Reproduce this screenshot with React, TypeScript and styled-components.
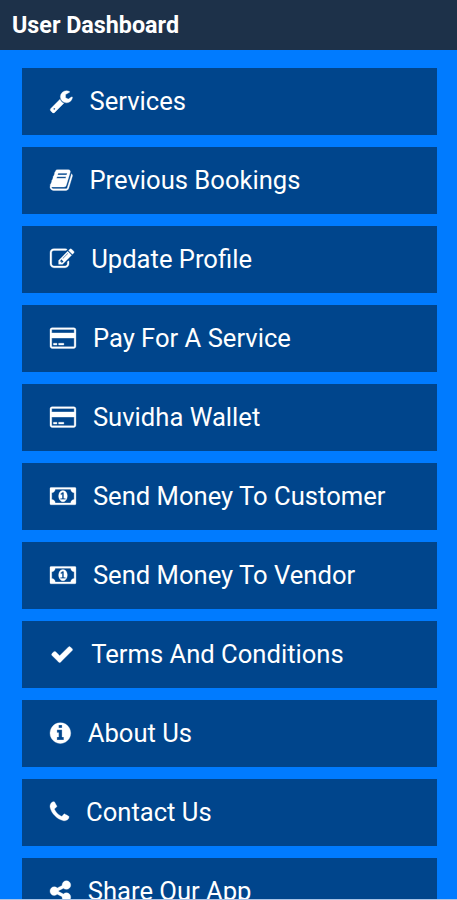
import React from 'react';
import styled, { createGlobalStyle } from 'styled-components';

const Global = createGlobalStyle`
  * { box-sizing: border-box; }
  body { margin: 0; background: #007bff; font-family: Roboto, sans-serif; }
`;

const Page = styled.div`
  height: 900px;
  display: flex;
  flex-direction: column;
  overflow: hidden;
  background: #007bff;
  border-bottom: 1px solid #a9c3e6;
`;

const Header = styled.header`
  flex: none;
  height: 50px;
  display: flex;
  align-items: center;
  padding: 0 12px;
  background: #1d3149;
  color: #fff;
  font-size: 23.3px;
  font-weight: 700;
`;

const Menu = styled.nav`
  display: flex;
  flex-direction: column;
  gap: 12px;
  padding: 18px 20px 0 22px;
`;

const MenuItem = styled.a`
  flex: none;
  height: 67px;
  display: flex;
  align-items: center;
  gap: 17px;
  padding: 0 0 1px 28px;
  background: #00458c;
  color: #fff;
`;

const Label = styled.span`
  font-size: 25.6px;
  line-height: 30px;
  white-space: nowrap;
`;

const Glyph = styled.svg<{ $units: number }>`
  flex: none;
  display: block;
  width: ${({ $units }) => ($units / 1792) * 24.2}px;
  height: 24.2px;
  margin-top: 1px;
  fill: currentColor;
  stroke: currentColor;
  stroke-width: 24;
  overflow: visible;
`;

type Icon = { left: number; units: number; d: string };

const wrench: Icon = {
  left: 64, units: 1664,
  d: 'M448 1472q0-26-19-45t-45-19-45 19-19 45 19 45 45 19 45-19 19-45zm644-420l-682 682q-37 37-90 37-52 0-91-37l-106-108q-38-36-38-90 0-53 38-91l681-681q39 98 114.5 173.5t173.5 114.5zm634-435q0 39-23 106-47 134-164.5 217.5t-258.5 83.5q-185 0-316.5-131.5t-131.5-316.5 131.5-316.5 316.5-131.5q58 0 121.5 16.5t107.5 46.5q16 11 16 28t-16 28l-293 169v224l193 107q5-3 79-48.5t135.5-81 70.5-35.5q15 0 23.5 10t8.5 25z',
};
const book: Icon = {
  left: 64, units: 1664,
  d: 'M1703 478q40 57 18 129l-275 906q-19 64-76.5 107.5t-122.5 43.5h-923q-77 0-148.5-53.5t-99.5-131.5q-24-67-2-127 0-4 3-27t4-37q1-8-3-21.5t-3-19.5q2-11 8-21t16.5-23.5 16.5-23.5q23-38 45-91.5t30-91.5q3-10 .5-30t-.5-28q3-11 17-28t17-23q21-36 42-92t25-90q1-9-2.5-32t.5-28q4-13 22-30.5t22-22.5q19-26 42.5-84.5t27.5-96.5q1-8-3-25.5t-2-26.5q2-8 9-18t18-23 17-21q8-12 16.5-30.5t15-35 16-36 19.5-32 26.5-23.5 36-11.5 47.5 5.5l-1 3q38-9 51-9h761q74 0 114 56t18 130l-274 906q-36 119-71.5 153.5t-128.5 34.5h-869q-27 0-38 15-11 16-1 43 24 70 144 70h923q29 0 56-15.5t35-41.5l300-987q7-22 5-57 38 15 59 43zm-1064 2q-4 13 2 22.5t20 9.5h608q13 0 25.5-9.5t16.5-22.5l21-64q4-13-2-22.5t-20-9.5h-608q-13 0-25.5 9.5t-16.5 22.5zm-83 256q-4 13 2 22.5t20 9.5h608q13 0 25.5-9.5t16.5-22.5l21-64q4-13-2-22.5t-20-9.5h-608q-13 0-25.5 9.5t-16.5 22.5z',
};
const edit: Icon = {
  left: 0, units: 1792,
  d: 'M888 1184l116-116-152-152-116 116v56h96v96h56zm440-720q-16-16-33 1l-350 350q-17 17-1 33t33-1l350-350q17-17 1-33zm80 594v190q0 119-84.5 203.5t-203.5 84.5h-832q-119 0-203.5-84.5t-84.5-203.5v-832q0-119 84.5-203.5t203.5-84.5h832q63 0 117 25 15 7 18 23 3 17-9 29l-49 49q-14 14-32 8-23-6-45-6h-832q-66 0-113 47t-47 113v832q0 66 47 113t113 47h832q66 0 113-47t47-113v-126q0-13 9-22l64-64q15-15 35-7t20 29zm-96-738l288 288-672 672h-288v-288zm444 132l-92 92-288-288 92-92q28-28 68-28t68 28l152 152q28 28 28 68t-28 68z',
};
const card: Icon = {
  left: 0, units: 1920,
  d: 'M1760 128q66 0 113 47t47 113v1216q0 66-47 113t-113 47h-1600q-66 0-113-47t-47-113v-1216q0-66 47-113t113-47h1600zm-1600 128q-13 0-22.5 9.5t-9.5 22.5v224h1664v-224q0-13-9.5-22.5t-22.5-9.5h-1600zm1600 1280q13 0 22.5-9.5t9.5-22.5v-608h-1664v608q0 13 9.5 22.5t22.5 9.5h1600zm-1504-128v-128h256v128h-256zm384 0v-128h384v128h-384z',
};
const money: Icon = {
  left: 0, units: 1920,
  d: 'M768 1152h384v-96h-128v-448h-114l-148 137 77 80q42-37 55-57h2v288h-128v96zm512-256q0 70-21 142t-59.5 134-101.5 101-138 39-138-39-101.5-101-59.5-134-21-142 21-142 59.5-134 101.5-101 138-39 138 39 101.5 101 59.5 134 21 142zm512 256v-512q-106 0-181-75t-75-181h-1152q0 106-75 181t-181 75v512q106 0 181 75t75 181h1152q0-106 75-181t181-75zm128-832v1152q0 26-19 45t-45 19h-1792q-26 0-45-19t-19-45v-1152q0-26 19-45t45-19h1792q26 0 45 19t19 45z',
};
const check: Icon = {
  left: 0, units: 1792,
  d: 'M1671 566q0 40-28 68l-724 724-136 136q-28 28-68 28t-68-28l-136-136-362-362q-28-28-28-68t28-68l136-136q28-28 68-28t68 28l294 295 656-657q28-28 68-28t68 28l136 136q28 28 28 68z',
};
const info: Icon = {
  left: 128, units: 1536,
  d: 'M1152 1376v-160q0-14-9-23t-23-9h-96v-512q0-14-9-23t-23-9h-320q-14 0-23 9t-9 23v160q0 14 9 23t23 9h96v320h-96q-14 0-23 9t-9 23v160q0 14 9 23t23 9h448q14 0 23-9t9-23zm-128-896v-160q0-14-9-23t-23-9h-192q-14 0-23 9t-9 23v160q0 14 9 23t23 9h192q14 0 23-9t9-23zm640 416q0 209-103 385.5t-279.5 279.5-385.5 103-385.5-103-279.5-279.5-103-385.5 103-385.5 279.5-279.5 385.5-103 385.5 103 279.5 279.5 103 385.5z',
};
const phone: Icon = {
  left: 192, units: 1408,
  d: 'M1600 1240q0 27-10 70.5t-21 68.5q-21 50-122 106-94 51-186 51-27 0-53-3.5t-57.5-12.5-47-14.5-55.5-20.5-49-18q-98-35-175-83-127-79-264-216t-216-264q-48-77-83-175-3-9-18-49t-20.5-55.5-14.5-47-12.5-57.5-3.5-53q0-92 51-186 56-101 106-122 25-11 68.5-21t70.5-10q14 0 21 3 18 6 53 76 11 19 30 54t35 63.5 31 53.5q3 4 17.5 25t21.5 35.5 7 28.5q0 20-28.5 50t-62 55-62 53-28.5 46q0 9 5 22.5t8.5 20.5 14 24 11.5 19q76 137 174 235t235 174q2 1 19 11.5t24 14 20.5 8.5 22.5 5q18 0 46-28.5t53-62 55-62 50-28.5q14 0 28.5 7t35.5 21.5 25 17.5q25 15 53.5 31t63.5 35 54 30q70 35 76 53 3 7 3 21z',
};
const share: Icon = {
  left: 128, units: 1536,
  d: 'M1344 1024q133 0 226.5 93.5t93.5 226.5-93.5 226.5-226.5 93.5-226.5-93.5-93.5-226.5q0-12 2-34l-360-180q-92 86-218 86-133 0-226.5-93.5t-93.5-226.5 93.5-226.5 226.5-93.5q126 0 218 86l360-180q-2-22-2-34 0-133 93.5-226.5t226.5-93.5 226.5 93.5 93.5 226.5-93.5 226.5-226.5 93.5q-126 0-218-86l-360 180q2 22 2 34t-2 34l360 180q92-86 218-86z',
};

const items: { icon: Icon; label: string }[] = [
  { icon: wrench, label: 'Services' },
  { icon: book, label: 'Previous Bookings' },
  { icon: edit, label: 'Update Profile' },
  { icon: card, label: 'Pay For A Service' },
  { icon: card, label: 'Suvidha Wallet' },
  { icon: money, label: 'Send Money To Customer' },
  { icon: money, label: 'Send Money To Vendor' },
  { icon: check, label: 'Terms And Conditions' },
  { icon: info, label: 'About Us' },
  { icon: phone, label: 'Contact Us' },
  { icon: share, label: 'Share Our App' },
];

export default function App() {
  return (
    <Page>
      <Global />
      <Header>User Dashboard</Header>
      <Menu>
        {items.map(({ icon, label }) => (
          <MenuItem key={label}>
            <Glyph $units={icon.units} viewBox={`${icon.left} 0 ${icon.units} 1792`} aria-hidden>
              <path d={icon.d} />
            </Glyph>
            <Label>{label}</Label>
          </MenuItem>
        ))}
      </Menu>
    </Page>
  );
}
